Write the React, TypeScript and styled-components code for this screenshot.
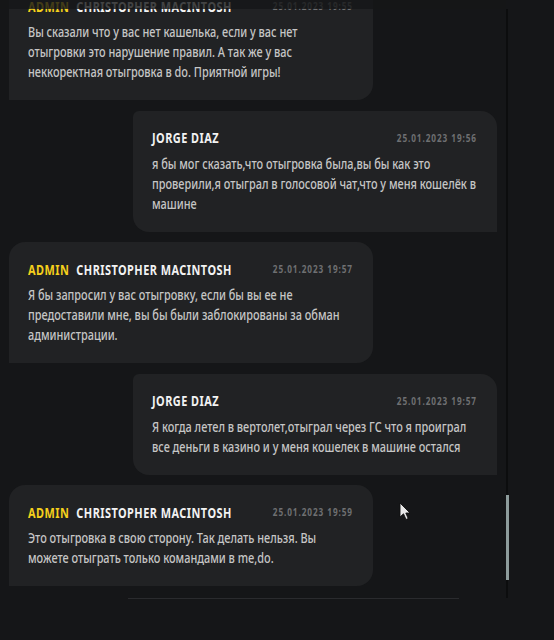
import styled, { createGlobalStyle } from "styled-components";

const GlobalStyle = createGlobalStyle`
  html, body {
    margin: 0;
    padding: 0;
    background: #151618;
  }
  body {
    font-family: "Noto Sans", "DejaVu Sans", sans-serif;
    -webkit-font-smoothing: antialiased;
  }
`;

// no condensed family is installed, so the bubble content is squeezed horizontally
const SQUEEZE = 0.78;

interface IMessage {
  id: number;
  mine: boolean;
  admin: boolean;
  name: string;
  date: string;
  text: string;
}

const messages: IMessage[] = [
  {
    id: 1,
    mine: false,
    admin: true,
    name: "Christopher Macintosh",
    date: "25.01.2023 19:55",
    text: "Вы сказали что у вас нет кашелька, если у вас нет отыгровки это нарушение правил. А так же у вас неккоректная отыгровка в do. Приятной игры!",
  },
  {
    id: 2,
    mine: true,
    admin: false,
    name: "Jorge Diaz",
    date: "25.01.2023 19:56",
    text: "я бы мог сказать,что отыгровка была,вы бы как это проверили,я отыграл в голосовой чат,что у меня кошелёк в машине",
  },
  {
    id: 3,
    mine: false,
    admin: true,
    name: "Christopher Macintosh",
    date: "25.01.2023 19:57",
    text: "Я бы запросил у вас отыгровку, если бы вы ее не предоставили мне, вы бы были заблокированы за обман администрации.",
  },
  {
    id: 4,
    mine: true,
    admin: false,
    name: "Jorge Diaz",
    date: "25.01.2023 19:57",
    text: "Я когда летел в вертолет,отыграл через ГС что я проиграл все деньги в казино и у меня кошелек в машине остался",
  },
  {
    id: 5,
    mine: false,
    admin: true,
    name: "Christopher Macintosh",
    date: "25.01.2023 19:59",
    text: "Это отыгровка в свою сторону. Так делать нельзя. Вы можете отыграть только командами в me,do.",
  },
];

export default function App() {
  return (
    <>
      <GlobalStyle />
      <Page>
        <ChatColumn>
          <Messages>
            {messages.map((m) => (
              <Bubble key={m.id} $mine={m.mine}>
                <Content>
                  <Header>
                    <Author>
                      {m.admin && <Role>Admin</Role>}
                      <Name>{m.name}</Name>
                    </Author>
                    <Time>{m.date}</Time>
                  </Header>
                  <Text>{m.text}</Text>
                </Content>
              </Bubble>
            ))}
          </Messages>
          <TopFade />
          <Footer />
        </ChatColumn>
        <ScrollTrack>
          <ScrollThumb />
        </ScrollTrack>
        <Cursor viewBox="0 0 12 19">
          <path
            d="M1 1 L1 15 L4.5 11.8 L7 17.5 L9.2 16.5 L6.8 11 L11 11 Z"
            fill="#e8e8e8"
            stroke="#111"
            strokeWidth="0.9"
            strokeLinejoin="round"
          />
        </Cursor>
      </Page>
    </>
  );
}

const Page = styled.div`
  position: relative;
  display: flex;
  width: 554px;
  height: 640px;
  overflow: hidden;
  background: #151618;
`;

const ChatColumn = styled.div`
  position: relative;
  display: flex;
  flex-direction: column;
  width: 506px;
`;

const Messages = styled.div`
  height: 598px;
  box-sizing: border-box;
  padding: 0 9px 12px 9px;
  display: flex;
  flex-direction: column;
  justify-content: flex-end;
  gap: 10.5px;
  overflow: hidden;
`;

const TopFade = styled.div`
  position: absolute;
  left: 0;
  top: 0;
  right: 0;
  height: 9px;
  background: rgba(21, 22, 24, 0.8);
`;

const Bubble = styled.div<{ $mine: boolean }>`
  flex-shrink: 0;
  box-sizing: border-box;
  width: 364px;
  align-self: ${(p) => (p.$mine ? "flex-end" : "flex-start")};
  padding: 18px 20px 18px 19px;
  background: #212224;
  border-radius: ${(p) => (p.$mine ? "6px 16px 0 16px" : "16px 16px 16px 0")};
`;

const Content = styled.div`
  width: calc(100% / ${SQUEEZE});
  transform: scaleX(${SQUEEZE});
  transform-origin: left top;
`;

const Header = styled.div`
  display: flex;
  align-items: center;
  justify-content: space-between;
  height: 18px;
  margin-bottom: 7px;
  white-space: nowrap;
`;

const Author = styled.div`
  display: flex;
  align-items: center;
  gap: 9px;
  font-size: 14px;
  font-weight: 700;
  letter-spacing: 0.6px;
  text-transform: uppercase;
`;

const Role = styled.span`
  color: #f5d01c;
`;

const Name = styled.span`
  color: #f2f2f2;
`;

const Time = styled.span`
  font-size: 10.5px;
  font-weight: 700;
  letter-spacing: 1.2px;
  color: #6f7072;
`;

const Text = styled.p`
  margin: 0;
  font-size: 14px;
  line-height: 20px;
  font-weight: 500;
  color: #c6c6c6;
`;

const Footer = styled.div`
  margin-left: 128px;
  width: 331px;
  border-top: 1px solid #2a2b2e;
`;

const ScrollTrack = styled.div`
  position: relative;
  margin-top: 9px;
  width: 2px;
  height: 589px;
  background: #0c0d0e;
`;

const ScrollThumb = styled.div`
  position: absolute;
  left: 0;
  top: 486px;
  width: 3px;
  height: 85px;
  background: #8d9c9c;
`;

const Cursor = styled.svg`
  position: absolute;
  left: 399px;
  top: 502px;
  width: 12px;
  height: 19px;
`;
